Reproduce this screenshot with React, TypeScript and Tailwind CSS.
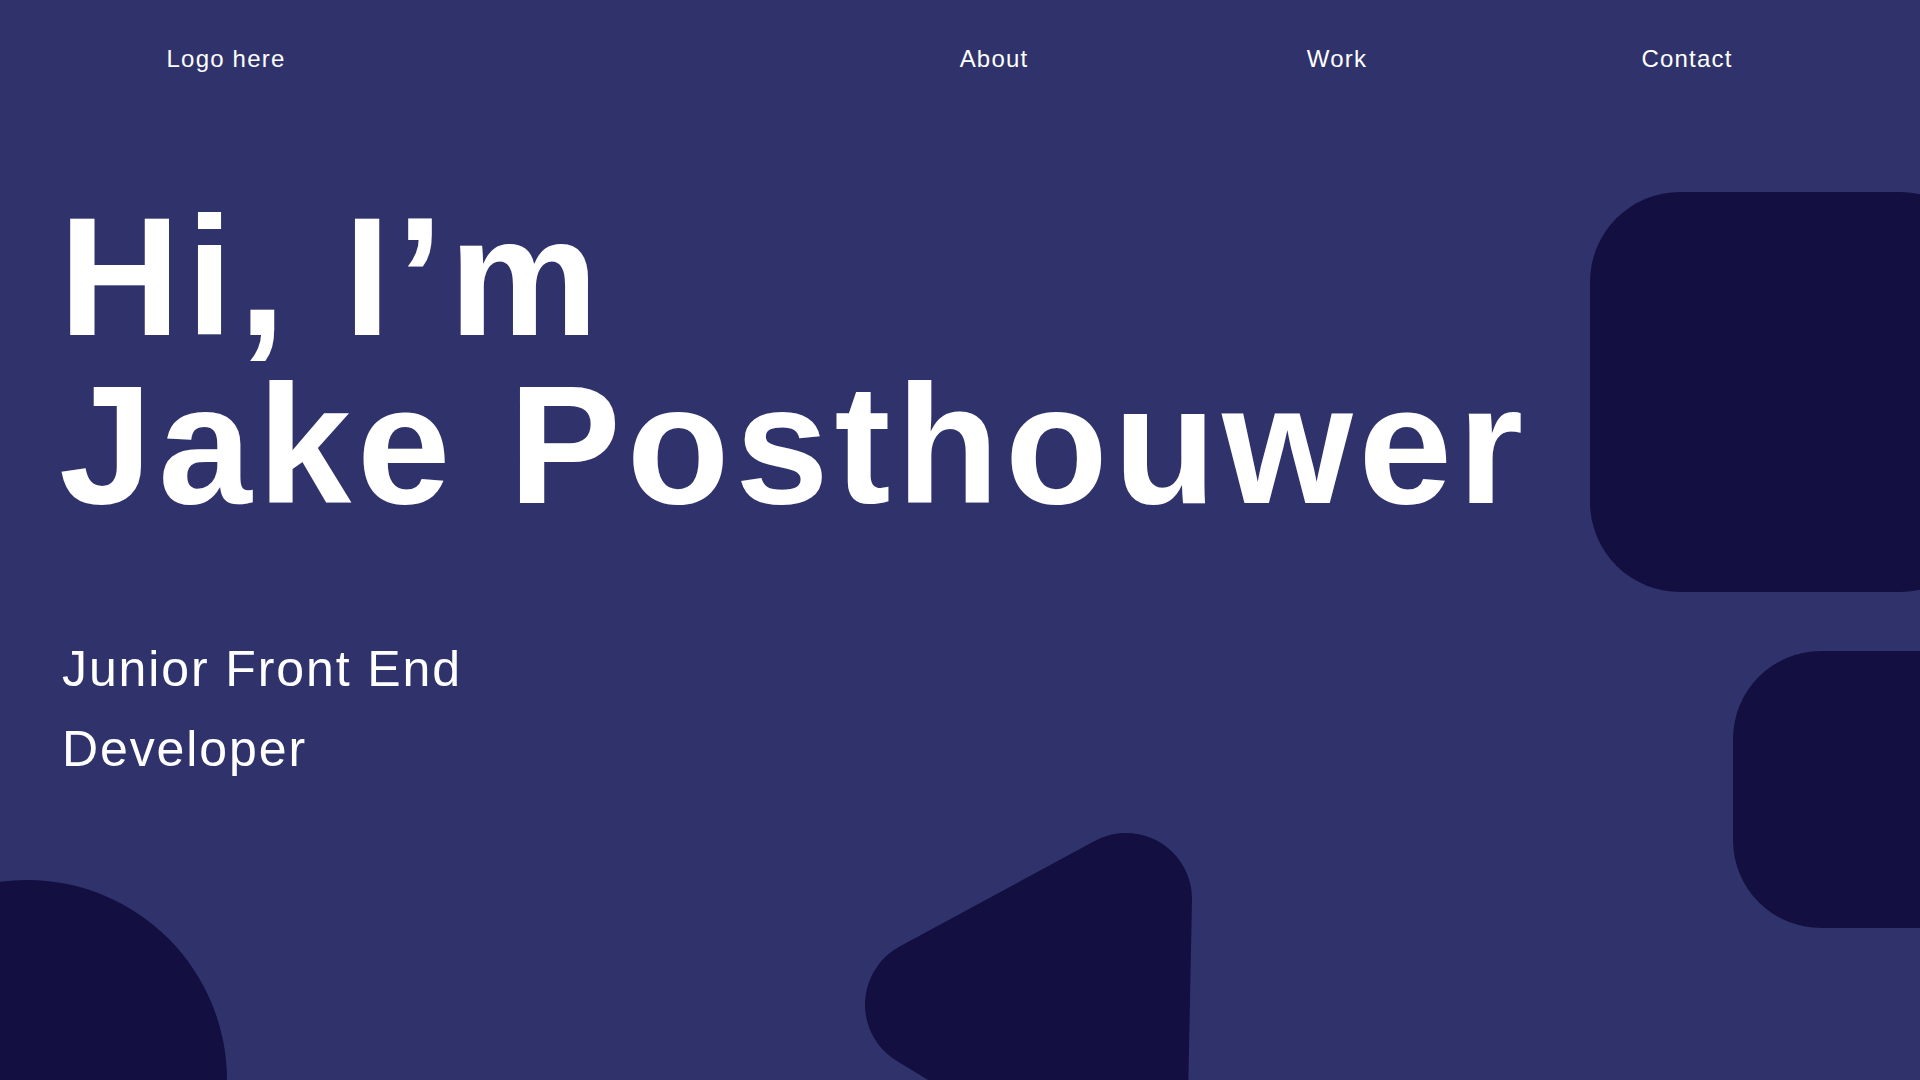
import React from "react";

export default function App() {
  return (
    <div
      className="relative w-full h-[1080px] overflow-hidden bg-[#30336b] text-white"
      style={{ fontFamily: '"Liberation Sans", Arial, sans-serif' }}
    >
      {/* decorative shapes */}
      <div className="absolute left-[1590px] top-[192px] w-[400px] h-[400px] rounded-[90px] bg-[#130f40]" />
      <div className="absolute left-[1733px] top-[651px] w-[300px] h-[277px] rounded-[88px] bg-[#130f40]" />
      <div className="absolute left-[-173px] top-[880px] w-[400px] h-[400px] rounded-full bg-[#130f40]" />
      <svg
        className="absolute left-0 top-0"
        width="1920"
        height="1080"
        viewBox="0 0 1920 1080"
        aria-hidden="true"
      >
        <polygon
          points="931,1004.6 1126,899 1121.6,1119.8"
          fill="#130f40"
          stroke="#130f40"
          strokeWidth="132"
          strokeLinejoin="round"
        />
      </svg>

      {/* nav */}
      <nav className="relative flex items-start pt-[41px] pl-[126px] text-[24px] leading-[36px] tracking-[0.05em]">
        <a className="w-[200px] text-center">Logo here</a>
        <a className="ml-[568px] w-[200px] text-center">About</a>
        <a className="ml-[143px] w-[200px] text-center">Work</a>
        <a className="ml-[150px] w-[200px] text-center">Contact</a>
      </nav>

      {/* hero */}
      <main className="relative pl-[59px]">
        <h1 className="mt-[116px] text-[168px] leading-[168px] font-bold tracking-[0.035em]">
          Hi, I’m
          <br />
          Jake Posthouwer
        </h1>
        <p className="mt-[100px] max-w-[480px] pl-[3px] text-[50px] leading-[80px] tracking-[0.038em]">
          Junior Front End Developer
        </p>
      </main>
    </div>
  );
}
